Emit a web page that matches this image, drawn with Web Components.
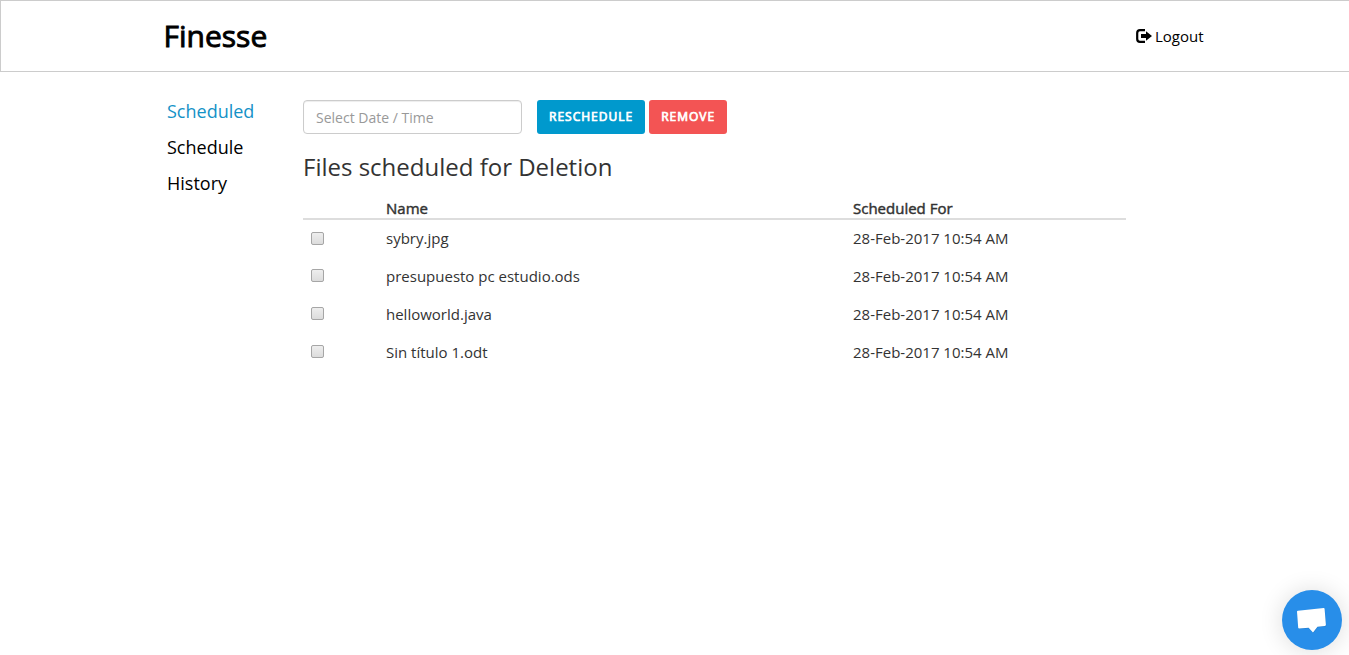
<!DOCTYPE html>
<html lang="en">
<head>
<meta charset="utf-8">
<title>Finesse</title>
<style>
html, body { margin: 0; background: #fff; }
body { font: 15px/22px "Open Sans", sans-serif; color: #333; }
</style>
</head>
<body>
<finesse-app></finesse-app>

<script>
const define = (name, html, setup) => {
  const template = document.createElement('template');
  template.innerHTML = html;
  customElements.define(name, class extends HTMLElement {
    connectedCallback() {
      if (this.shadowRoot) return;
      const root = this.attachShadow({ mode: 'open' });
      root.append(template.content.cloneNode(true));
      if (setup) setup(this, root);
    }
  });
};

define('site-header', `
<style>
:host { display: block; border: 1px solid #ccc; border-right: 0; }
.inner { display: flex; align-items: center; justify-content: space-between; box-sizing: border-box; max-width: 1061px; height: 70px; margin: 0 auto; padding: 0 2px 0 19px; }
h1 { margin: 0; font-size: 30px; line-height: 40px; font-weight: 400; color: #000; -webkit-text-stroke: .03em #000; }
a { display: flex; align-items: center; gap: 3px; color: #000; text-decoration: none; }
svg { display: block; }
</style>
<header class="inner">
  <h1>Finesse</h1>
  <a href="#logout">
    <svg width="16" height="14" viewBox="0 0 16 14" aria-hidden="true">
      <path d="M9 1.2H4Q1.2 1.2 1.2 4V10Q1.2 12.8 4 12.8H9" fill="none" stroke="#000" stroke-width="2.2"/>
      <path d="M5 5h5V2.2L16 7l-6 4.8V9H5z"/>
    </svg>
    <slot></slot>
  </a>
</header>`);

define('side-nav', `
<style>
:host { display: block; }
nav { display: flex; flex-direction: column; align-items: flex-start; gap: 14px; }
</style>
<nav><slot></slot></nav>`);

define('nav-item', `
<style>
:host { display: block; font-size: 18px; line-height: 22px; color: #000; }
:host([active]) { color: #1492c7; }
a { color: inherit; text-decoration: none; }
</style>
<a><slot></slot></a>`, (host, root) => {
  root.querySelector('a').href = host.getAttribute('href');
});

define('date-field', `
<style>
:host { display: block; }
input { display: block; box-sizing: border-box; width: 219px; height: 34px; margin: 0; padding: 6px 12px; border: 1px solid #ccc; border-radius: 4px; background: #fff; box-shadow: inset 0 1px 1px rgba(0,0,0,.075); font: 14px/20px "Open Sans", sans-serif; color: #555; }
input::placeholder { color: #999; opacity: 1; }
</style>
<input type="text" placeholder="Select Date / Time" aria-label="Select Date / Time">`);

define('action-button', `
<style>
:host { display: block; }
button { display: block; height: 34px; margin: 0; padding: 0 12px; border: 0; border-radius: 3px; background: #0099cd; color: #fff; font: 400 12px/34px "Open Sans", sans-serif; letter-spacing: 1px; -webkit-text-stroke: .06em #fff; text-transform: uppercase; cursor: pointer; }
:host([kind="danger"]) button { background: #f35454; }
</style>
<button type="button"><slot></slot></button>`);

define('file-table', `
<style>
:host { display: block; }
table { width: 100%; border-collapse: collapse; table-layout: fixed; }
.pick { width: 75px; }
.name { width: 467px; }
th { box-sizing: border-box; height: 22px; padding: 0 8px; border-bottom: 2px solid #ddd; text-align: left; font-weight: 400; line-height: 20px; -webkit-text-stroke: .03em #333; }
td { box-sizing: border-box; height: 38px; padding: 0 8px 1px; }
input { appearance: none; display: block; box-sizing: border-box; width: 13px; height: 13px; margin: 0; border: 1px solid #a6a6a6; border-radius: 2px; background: linear-gradient(#eee, #dcdcdc); }
input:checked { background: #0099cd; }
</style>
<table>
  <colgroup><col class="pick"><col class="name"><col></colgroup>
  <thead><tr><th></th><th scope="col">Name</th><th scope="col">Scheduled For</th></tr></thead>
  <tbody></tbody>
</table>`, (host, root) => {
  const files = ['sybry.jpg', 'presupuesto pc estudio.ods', 'helloworld.java', 'Sin título 1.odt'];
  root.querySelector('tbody').innerHTML = files.map((file, i) =>
    `<tr><td><input type="checkbox" id="file-${i}"></td><td><label for="file-${i}">${file}</label></td><td>28-Feb-2017 10:54 AM</td></tr>`).join('');
});

define('chat-launcher', `
<style>
:host { position: fixed; right: 7px; bottom: 5px; }
button { display: block; width: 60px; height: 60px; margin: 0; padding: 0; border: 0; border-radius: 50%; background: #288ee9; box-shadow: 0 1px 24px rgba(0,0,0,.14); cursor: pointer; }
svg { display: block; }
</style>
<button type="button" aria-label="Open chat">
  <svg width="60" height="60" viewBox="0 0 60 60" aria-hidden="true">
    <path d="M15.2 22.3Q15.1 21.3 16.2 21.2L41.8 18.2Q42.7 18.1 42.8 19L44.2 35.2Q44.3 36.4 43.2 36.5L35.8 37.2L31.3 43L26.8 38.2L17.5 39Q16.6 39.1 16.5 38.2Z" fill="#1766b0" opacity=".45"/>
    <path d="M15 21.8Q14.9 20.8 16 20.7L41.6 17.9Q42.5 17.8 42.6 18.7L43.9 34.8Q44 35.9 42.9 36L35.5 36.7L31 42.5L26.6 37.7L17.2 38.5Q16.3 38.6 16.2 37.7Z" fill="#fff"/>
  </svg>
</button>`);

define('finesse-app', `
<style>
:host { display: block; }
.page { display: grid; grid-template-columns: 136px minmax(0, 1fr); box-sizing: border-box; max-width: 1061px; margin: 0 auto; padding: 28px 79px 28px 23px; }
.toolbar { display: flex; align-items: center; gap: 4px; }
date-field { margin-right: 11px; }
h2 { margin: 16px 0 13px; font-size: 24px; line-height: 34px; font-weight: 400; }
</style>
<site-header>Logout</site-header>
<div class="page">
  <side-nav>
    <nav-item active href="#scheduled">Scheduled</nav-item>
    <nav-item href="#schedule">Schedule</nav-item>
    <nav-item href="#history">History</nav-item>
  </side-nav>
  <main>
    <div class="toolbar">
      <date-field></date-field>
      <action-button>Reschedule</action-button>
      <action-button kind="danger">Remove</action-button>
    </div>
    <h2>Files scheduled for Deletion</h2>
    <file-table></file-table>
  </main>
</div>
<chat-launcher></chat-launcher>`);
</script>
</body>
</html>
